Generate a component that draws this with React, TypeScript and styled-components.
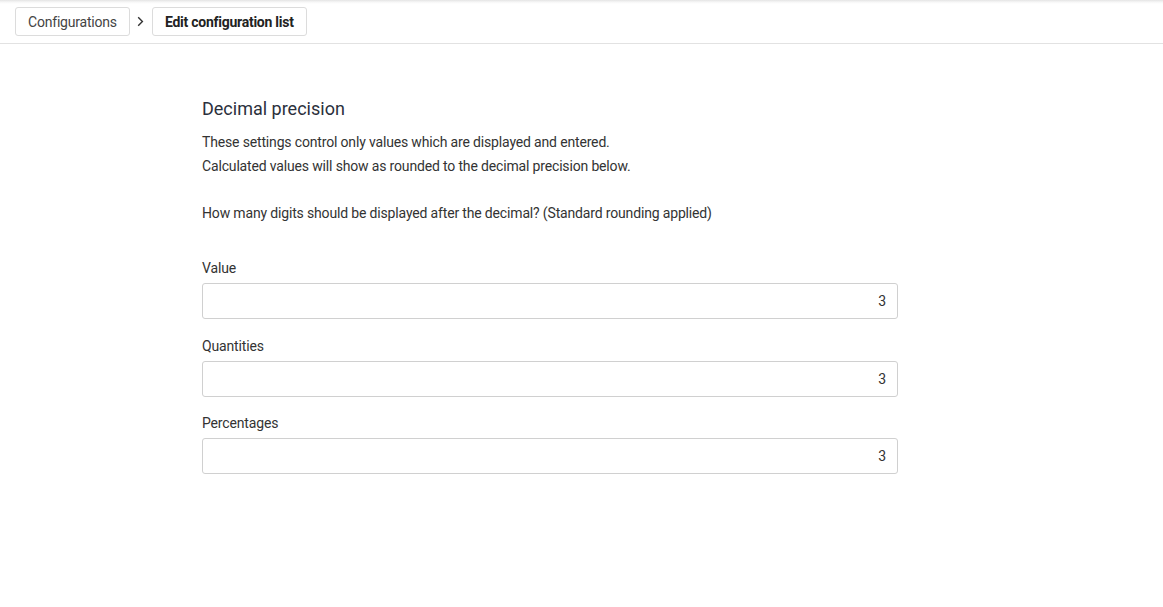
import React from "react";
import styled, { createGlobalStyle } from "styled-components";

const Global = createGlobalStyle`
  html, body { margin: 0; padding: 0; background: #fff; }
  body { font-family: Roboto, "Noto Sans", Arial, sans-serif; color: #333; }
  * { box-sizing: border-box; }
`;

const Page = styled.div`
  min-height: 607px;
  background: linear-gradient(to bottom, #e4e4e4 0px, #f6f6f6 2px, #fff 4px) no-repeat;
  background-size: 100% 4px;
  background-color: #fff;
`;

const Header = styled.header`
  height: 44px;
  border-bottom: 1px solid #e2e2e2;
  display: flex;
  align-items: center;
  padding: 0 15px;
`;

const Crumb = styled.div<{ $current?: boolean }>`
  height: 29px;
  display: flex;
  align-items: center;
  padding: 0 12px;
  border: 1px solid #dcdcdc;
  border-radius: 3px;
  font-size: 14px;
  letter-spacing: ${(p) => (p.$current ? "-0.25px" : "-0.2px")};
  color: ${(p) => (p.$current ? "#222" : "#444")};
  font-weight: ${(p) => (p.$current ? 700 : 400)};
  background: #fff;
`;

const Sep = styled.span`
  width: 22px;
  display: flex;
  justify-content: center;
  align-items: center;
  color: #333;
`;

const Content = styled.main`
  width: 696px;
  margin: 0 0 0 202px;
  padding-top: 53px;
`;

const Title = styled.h2`
  margin: 0 0 9px;
  font-size: 18px;
  font-weight: 400;
  color: #2b303c;
  line-height: 24px;
`;

const Para = styled.p`
  margin: 0;
  font-size: 14px;
  letter-spacing: -0.16px;
  line-height: 24px;
  color: #333;
`;

const Question = styled(Para)`
  margin-top: 23px;
`;

const Fields = styled.div`
  margin-top: 34px;
  display: flex;
  flex-direction: column;
  gap: 17.5px;
`;

const Field = styled.label`
  display: flex;
  flex-direction: column;
  gap: 6px;
`;

const Label = styled.span`
  font-size: 14px;
  letter-spacing: -0.16px;
  line-height: 18px;
  color: #333;
`;

const Input = styled.input`
  width: 696px;
  height: 36px;
  border: 1px solid #d0d0d0;
  border-radius: 3px;
  padding: 0 11px;
  text-align: right;
  font-family: Roboto, "Noto Sans", Arial, sans-serif;
  font-size: 14px;
  color: #333;
  outline: none;
  background: #fff;
`;

const fields = ["Value", "Quantities", "Percentages"];

export default function App() {
  return (
    <Page>
      <Global />
      <Header>
        <Crumb>Configurations</Crumb>
        <Sep>
          <svg width="7" height="11" viewBox="0 0 7 11" fill="none">
            <path d="M1.2 1.2 L5.4 5.5 L1.2 9.8" stroke="#333" strokeWidth="1.4" />
          </svg>
        </Sep>
        <Crumb $current>Edit configuration list</Crumb>
      </Header>
      <Content>
        <Title>Decimal precision</Title>
        <Para>These settings control only values which are displayed and entered.</Para>
        <Para>Calculated values will show as rounded to the decimal precision below.</Para>
        <Question>How many digits should be displayed after the decimal? (Standard rounding applied)</Question>
        <Fields>
          {fields.map((f) => (
            <Field key={f}>
              <Label>{f}</Label>
              <Input defaultValue="3" readOnly />
            </Field>
          ))}
        </Fields>
      </Content>
    </Page>
  );
}
